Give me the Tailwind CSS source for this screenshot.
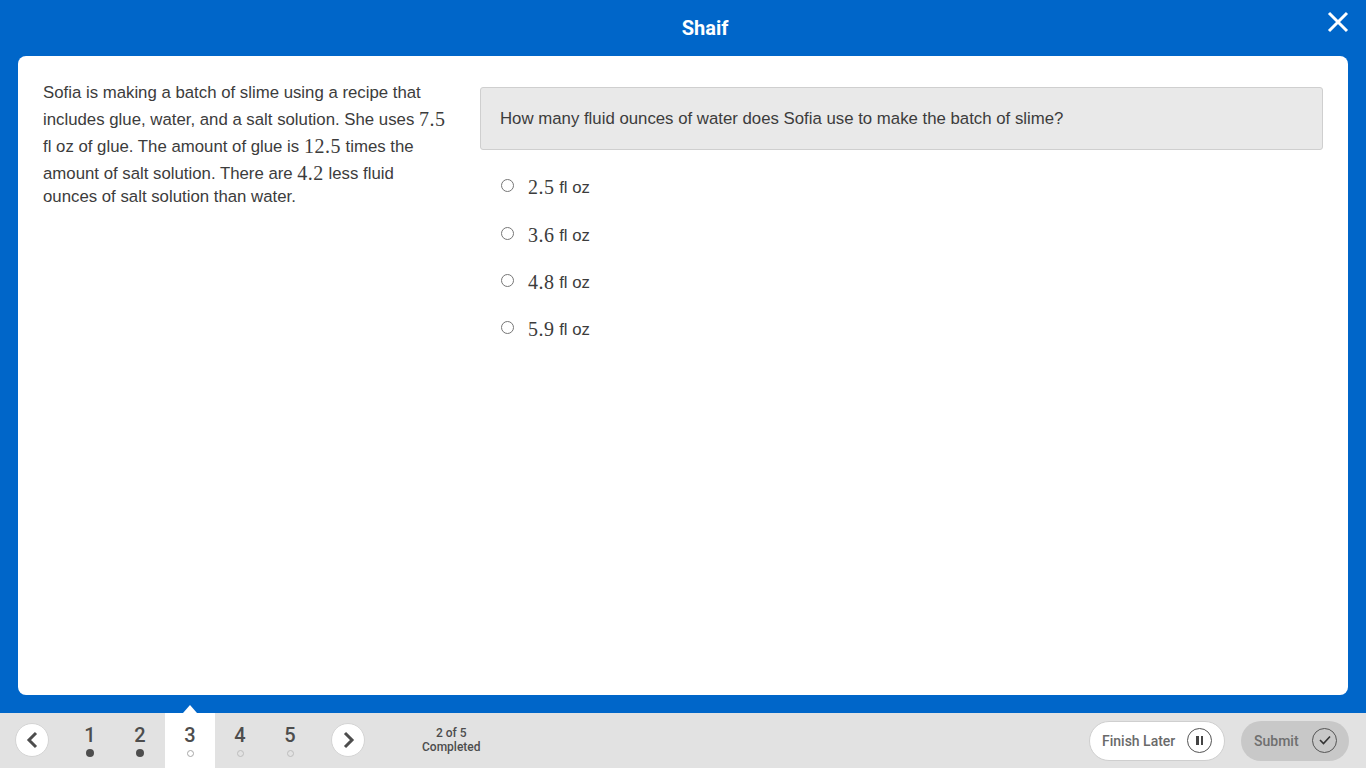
<!DOCTYPE html>
<html lang="en">
<head>
<meta charset="utf-8">
<title>Shaif</title>
<script src="https://cdn.jsdelivr.net/npm/@tailwindcss/browser@4"></script>
</head>
<body class="m-0 overflow-hidden">
<div class="w-[1366px] h-[768px] flex flex-col bg-[#0066c9] font-['Liberation_Sans',Arial,sans-serif] text-[#3c3c3c]">
  <header class="relative h-[56px] shrink-0 flex items-center justify-center pl-[44px] text-white">
    <h1 class="font-['Roboto',sans-serif] text-[20px] font-bold">Shaif</h1>
    <button class="absolute left-[1327px] top-[11px] w-[22px] h-[22px]" aria-label="Close">
      <svg viewBox="0 0 22 22" class="w-[22px] h-[22px]" fill="none" stroke="#ffffff" stroke-width="3"><path d="M2 2 L20 20 M20 2 L2 20"/></svg>
    </button>
  </header>
  <main class="mx-[18px] h-[639px] shrink-0 bg-white rounded-[8px] flex pl-[25px] pr-[25px] text-[16.8px]">
    <section class="w-[405px] shrink-0 pt-[25px] leading-[23px]">
      <p>Sofia is making a batch of slime using a recipe that includes glue, water, and a salt solution. She uses <span class="inline-block relative top-[1px] pt-[3px] pb-[1px] leading-[23px] font-['Liberation_Serif',serif] text-[20px] tracking-[0.5px]">7.5</span> fl oz of glue. The amount of glue is <span class="inline-block relative top-[1px] pt-[3px] pb-[1px] leading-[23px] font-['Liberation_Serif',serif] text-[20px] tracking-[0.5px]">12.5</span> times the amount of salt solution. There are <span class="inline-block relative top-[1px] pt-[3px] pb-[1px] leading-[23px] font-['Liberation_Serif',serif] text-[20px] tracking-[0.5px]">4.2</span> less fluid ounces of salt solution than water.</p>
    </section>
    <section class="ml-[32px] flex-1 pt-[31px]">
      <div class="h-[63px] flex items-center px-[19px] bg-[#e9e9e9] border border-[#cfcfcf] rounded-[3px]">How many fluid ounces of water does Sofia use to make the batch of slime?</div>
      <div class="mt-[13px] flex flex-col pl-[21px]">
        <label class="h-[48px] flex items-center"><input type="radio" name="a" class="w-[13px] h-[13px] m-0 mb-[3px] accent-[#767676]"><span class="ml-[14px] pb-[2px]"><span class="relative top-[1px] font-['Liberation_Serif',serif] text-[20px] tracking-[0.5px]">2.5</span> fl oz</span></label>
        <label class="h-[47px] flex items-center"><input type="radio" name="a" class="w-[13px] h-[13px] m-0 mb-[3px] accent-[#767676]"><span class="ml-[14px] pb-[2px]"><span class="relative top-[1px] font-['Liberation_Serif',serif] text-[20px] tracking-[0.5px]">3.6</span> fl oz</span></label>
        <label class="h-[47px] flex items-center"><input type="radio" name="a" class="w-[13px] h-[13px] m-0 mb-[3px] accent-[#767676]"><span class="ml-[14px] pb-[2px]"><span class="relative top-[1px] font-['Liberation_Serif',serif] text-[20px] tracking-[0.5px]">4.8</span> fl oz</span></label>
        <label class="h-[47px] flex items-center"><input type="radio" name="a" class="w-[13px] h-[13px] m-0 mb-[3px] accent-[#767676]"><span class="ml-[14px] pb-[2px]"><span class="relative top-[1px] font-['Liberation_Serif',serif] text-[20px] tracking-[0.5px]">5.9</span> fl oz</span></label>
      </div>
    </section>
  </main>
  <footer class="relative mt-[18px] h-[55px] shrink-0 bg-[#e2e2e2] flex items-center font-['Roboto',sans-serif] text-[#4d4d4d]">
    <button class="ml-[15px] -mt-[2px] w-[34px] h-[34px] rounded-full bg-white border border-[#d4d4d4] flex items-center justify-center" aria-label="Previous">
      <svg viewBox="0 0 12 18" class="w-[12px] h-[18px] -ml-[1px]" fill="none" stroke="#4d4d4d" stroke-width="3"><path d="M10 2 L3 9 L10 16"/></svg>
    </button>
    <nav class="ml-[16px] flex h-full">
      <div class="w-[50px] flex flex-col items-center pt-[9px]"><span class="text-[20px] leading-[26px] font-medium">1</span><span class="mt-[1px] w-[8px] h-[8px] rounded-full bg-[#4d4d4d]"></span></div>
      <div class="w-[50px] flex flex-col items-center pt-[9px]"><span class="text-[20px] leading-[26px] font-medium">2</span><span class="mt-[1px] w-[8px] h-[8px] rounded-full bg-[#4d4d4d]"></span></div>
      <div class="relative w-[50px] bg-white flex flex-col items-center pt-[9px]"><span class="absolute -top-[8px] left-[18px] w-0 h-0 border-x-[7px] border-x-transparent border-b-[8px] border-b-white"></span><span class="text-[20px] leading-[26px] font-medium">3</span><span class="mt-[2px] w-[7px] h-[7px] rounded-full border border-[#a8a8a8]"></span></div>
      <div class="w-[50px] flex flex-col items-center pt-[9px]"><span class="text-[20px] leading-[26px] font-medium">4</span><span class="mt-[2px] w-[7px] h-[7px] rounded-full border border-[#bdbdbd]"></span></div>
      <div class="w-[50px] flex flex-col items-center pt-[9px]"><span class="text-[20px] leading-[26px] font-medium">5</span><span class="mt-[2px] w-[7px] h-[7px] rounded-full border border-[#bdbdbd]"></span></div>
    </nav>
    <button class="ml-[16px] -mt-[2px] w-[34px] h-[34px] rounded-full bg-white border border-[#d4d4d4] flex items-center justify-center" aria-label="Next">
      <svg viewBox="0 0 12 18" class="w-[12px] h-[18px] ml-[1px]" fill="none" stroke="#4d4d4d" stroke-width="3"><path d="M2 2 L9 9 L2 16"/></svg>
    </button>
    <div class="ml-[57px] -mt-[2px] text-center text-[12px] leading-[14px] font-medium">2 of 5<br>Completed</div>
    <button class="ml-auto w-[136px] h-[40px] rounded-full bg-white border border-[#cfcfcf] flex items-center justify-between pl-[12px] pr-[12px] text-[14px] text-[#6a6a6a] font-medium">
      <span class="pt-[2px]">Finish Later</span>
      <span class="w-[25px] h-[25px] -mt-[1px] rounded-full border border-[#555] flex items-center justify-center gap-[2px]"><span class="w-[2.5px] h-[9px] bg-[#444]"></span><span class="w-[2.5px] h-[9px] bg-[#444]"></span></span>
    </button>
    <button class="ml-[16px] mr-[17px] w-[108px] h-[40px] rounded-full bg-[#c8c8c8] flex items-center justify-between pl-[13px] pr-[12px] text-[14px] text-[#6f6f6f] font-medium">
      <span class="pt-[2px]">Submit</span>
      <span class="w-[25px] h-[25px] -mt-[1px] rounded-full border border-[#555] flex items-center justify-center">
        <svg viewBox="0 0 12 10" class="w-[12px] h-[10px]" fill="none" stroke="#333" stroke-width="1.6"><path d="M1 5 L4.5 8.5 L11 1.5"/></svg>
      </span>
    </button>
  </footer>
</div>
</body>
</html>
